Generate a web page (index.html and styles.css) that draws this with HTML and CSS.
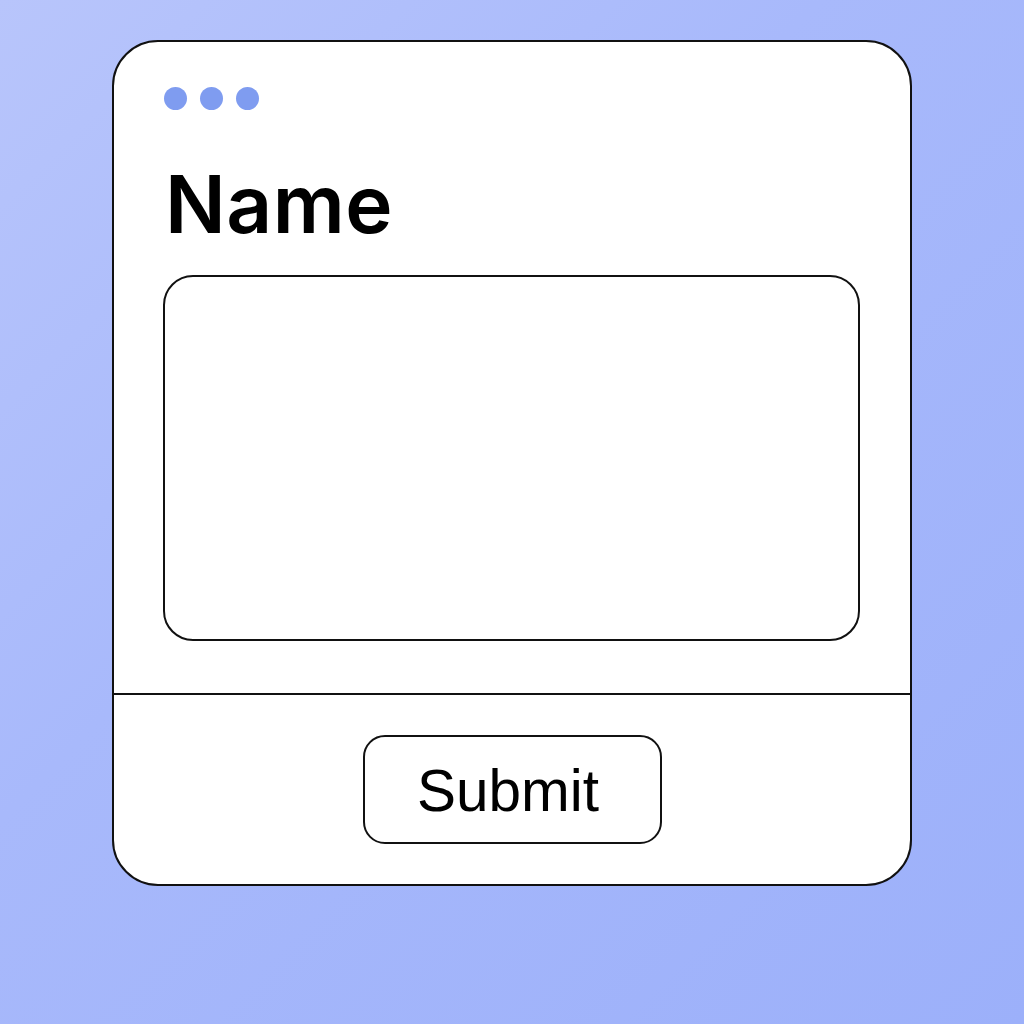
FILE: index.html
```html
<!DOCTYPE html>
<html>
<head>
<meta charset="utf-8">
<link rel="stylesheet" href="styles.css">
</head>
<body>
<div class="page">
  <div class="card">
    <div class="main">
      <div class="dots"><span class="dot"></span><span class="dot"></span><span class="dot"></span></div>
      <div class="label">Name</div>
      <div class="field"></div>
    </div>
    <div class="footer">
      <div class="button">Submit</div>
    </div>
  </div>
</div>
</body>
</html>
```
FILE: styles.css
```css
html, body {
  margin: 0;
  padding: 0;
}
body {
  width: 1024px;
  height: 1024px;
  background: linear-gradient(135deg, #b8c5fb 0%, #a8b9fb 40%, #9cb0fa 100%);
  font-family: Inter, "Liberation Sans", sans-serif;
}
.page {
  padding: 40px 0 0 112px;
}
.card {
  box-sizing: border-box;
  width: 800px;
  height: 846px;
  background: #fff;
  border: 2px solid #111;
  border-radius: 46px;
  display: flex;
  flex-direction: column;
  overflow: hidden;
}
.main {
  padding: 45px 50px 0 49px;
  height: 653px;
  box-sizing: border-box;
  border-bottom: 2px solid #111;
  display: flex;
  flex-direction: column;
}
.dots {
  display: flex;
  gap: 13px;
  padding-left: 1px;
}
.dot {
  width: 23px;
  height: 23px;
  border-radius: 50%;
  background: #7f9cf0;
}
.label {
  margin-top: 54px;
  font-size: 80px;
  line-height: 80px;
  font-weight: 600;
  letter-spacing: 0.5px;
  color: #000;
  padding-left: 2px;
}
.field {
  margin-top: 31px;
  height: 366px;
  box-sizing: border-box;
  border: 2px solid #111;
  border-radius: 30px;
}
.footer {
  flex: 1;
  display: flex;
  align-items: center;
  justify-content: center;
}
.button {
  box-sizing: border-box;
  width: 299px;
  height: 109px;
  border: 2px solid #111;
  border-radius: 22px;
  display: flex;
  align-items: center;
  justify-content: center;
  font-family: "Liberation Sans", Arial, sans-serif;
  font-size: 58.5px;
  color: #000;
  padding-top: 2px;
  padding-right: 8px;
}
```
